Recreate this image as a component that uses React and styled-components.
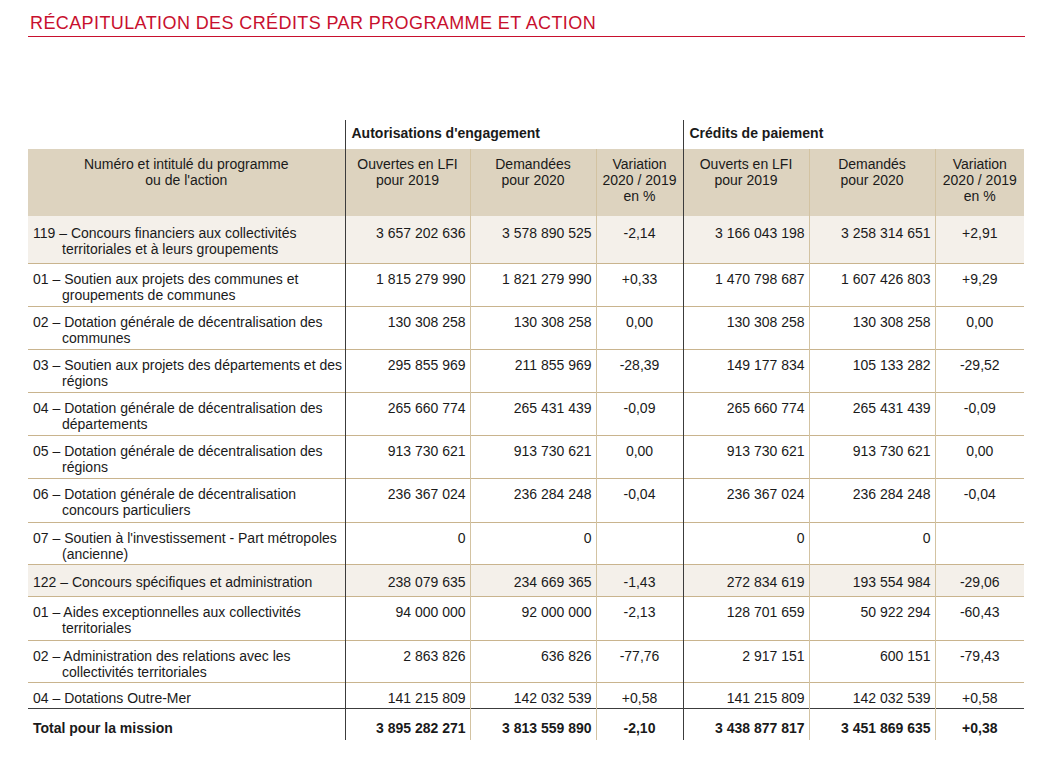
import styled, { createGlobalStyle } from 'styled-components';

const GlobalStyle = createGlobalStyle`
  body {
    margin: 0;
    background: #ffffff;
    font-family: "Liberation Sans", Arial, sans-serif;
    color: #1a1a1a;
  }
`;

const Page = styled.div`
  width: 997px;
  padding: 12px 0 0 28px;
`;

const Title = styled.h1`
  margin: 0;
  padding: 0 0 2px 2px;
  font-size: 18px;
  line-height: 22px;
  font-weight: normal;
  letter-spacing: 0.4px;
  color: #c8102e;
  border-bottom: 1px solid #c8102e;
`;

const Table = styled.table`
  margin-top: 83px;
  width: 996px;
  table-layout: fixed;
  border-collapse: collapse;
  font-size: 14px;
  line-height: 16px;

  td:nth-child(2), td:nth-child(5), th.split {
    border-left: 1px solid #3c3c3c;
  }
  td:nth-child(3), td:nth-child(4), td:nth-child(6), td:nth-child(7) {
    border-left: 1px solid #d3c3a2;
  }
`;

const GroupRow = styled.tr`
  height: 29px;
`;

const GroupCell = styled.th`
  padding: 5px 0 0 6px;
  text-align: left;
  vertical-align: top;
  font-weight: bold;
`;

const HeadRow = styled.tr`
  height: 67px;
  background: #ddd3bf;

  td {
    padding: 7px 2px 0;
    text-align: center;
    vertical-align: top;
    font-weight: normal;
  }
`;

const lineColor = p => {
  if (p.$last) return '#3c3c3c';
  if (p.$bold) return 'transparent';
  return '#c9b48e';
};

const Row = styled.tr`
  height: ${p => p.$h}px;
  background: ${p => (p.$program ? '#f4f0ea' : '#ffffff')};
  border-bottom: 1px solid ${lineColor};
  font-weight: ${p => (p.$bold ? 'bold' : 'normal')};

  td {
    padding-top: ${p => p.$pt}px;
    vertical-align: top;
    white-space: nowrap;
  }
`;

const Label = styled.td`
  padding-left: 34px;
  text-indent: -29px;
  padding-right: 2px;
`;

const Amount = styled.td`
  text-align: right;
  padding-right: 4px;
`;

const Variation = styled.td`
  text-align: center;
`;

const widths = [317, 125, 126, 87, 126, 126, 89];

const rows = [
  { label: ['119 – Concours financiers aux collectivités', 'territoriales et à leurs groupements'], program: true, h: 47, pt: 9, v: ['3 657 202 636', '3 578 890 525', '-2,14', '3 166 043 198', '3 258 314 651', '+2,91'] },
  { label: ['01 – Soutien aux projets des communes et', 'groupements de communes'], h: 43, v: ['1 815 279 990', '1 821 279 990', '+0,33', '1 470 798 687', '1 607 426 803', '+9,29'] },
  { label: ['02 – Dotation générale de décentralisation des', 'communes'], h: 43, v: ['130 308 258', '130 308 258', '0,00', '130 308 258', '130 308 258', '0,00'] },
  { label: ['03 – Soutien aux projets des départements et des', 'régions'], h: 43, v: ['295 855 969', '211 855 969', '-28,39', '149 177 834', '105 133 282', '-29,52'] },
  { label: ['04 – Dotation générale de décentralisation des', 'départements'], h: 43, v: ['265 660 774', '265 431 439', '-0,09', '265 660 774', '265 431 439', '-0,09'] },
  { label: ['05 – Dotation générale de décentralisation des', 'régions'], h: 43, v: ['913 730 621', '913 730 621', '0,00', '913 730 621', '913 730 621', '0,00'] },
  { label: ['06 – Dotation générale de décentralisation', 'concours particuliers'], h: 44, v: ['236 367 024', '236 284 248', '-0,04', '236 367 024', '236 284 248', '-0,04'] },
  { label: ["07 – Soutien à l'investissement - Part métropoles", '(ancienne)'], h: 42, v: ['0', '0', '', '0', '0', ''] },
  { label: ['122 – Concours spécifiques et administration'], program: true, h: 32, pt: 9, v: ['238 079 635', '234 669 365', '-1,43', '272 834 619', '193 554 984', '-29,06'] },
  { label: ['01 – Aides exceptionnelles aux collectivités', 'territoriales'], h: 44, v: ['94 000 000', '92 000 000', '-2,13', '128 701 659', '50 922 294', '-60,43'] },
  { label: ['02 – Administration des relations avec les', 'collectivités territoriales'], h: 42, v: ['2 863 826', '636 826', '-77,76', '2 917 151', '600 151', '-79,43'] },
  { label: ['04 – Dotations Outre-Mer'], h: 26, last: true, v: ['141 215 809', '142 032 539', '+0,58', '141 215 809', '142 032 539', '+0,58'] },
];

const total = ['3 895 282 271', '3 813 559 890', '-2,10', '3 438 877 817', '3 451 869 635', '+0,38'];

const Values = ({ v }) =>
  v.map((x, i) =>
    i % 3 === 2 ? <Variation key={i}>{x}</Variation> : <Amount key={i}>{x}</Amount>
  );

export default function App() {
  return (
    <Page>
      <GlobalStyle />
      <Title>RÉCAPITULATION DES CRÉDITS PAR PROGRAMME ET ACTION</Title>
      <Table>
        <colgroup>
          {widths.map((w, i) => <col key={i} style={{ width: w }} />)}
        </colgroup>
        <thead>
          <GroupRow>
            <GroupCell />
            <GroupCell className="split" colSpan={3}>Autorisations d'engagement</GroupCell>
            <GroupCell className="split" colSpan={3}>Crédits de paiement</GroupCell>
          </GroupRow>
          <HeadRow>
            <td>Numéro et intitulé du programme<br />ou de l'action</td>
            <td>Ouvertes en LFI<br />pour 2019</td>
            <td>Demandées<br />pour 2020</td>
            <td>Variation<br />2020 / 2019<br />en %</td>
            <td>Ouverts en LFI<br />pour 2019</td>
            <td>Demandés<br />pour 2020</td>
            <td>Variation<br />2020 / 2019<br />en %</td>
          </HeadRow>
        </thead>
        <tbody>
          {rows.map((r, i) => (
            <Row key={i} $h={r.h} $pt={r.pt || 7} $program={r.program} $last={r.last}>
              <Label>
                {r.label[0]}
                {r.label[1] && <><br />{r.label[1]}</>}
              </Label>
              <Values v={r.v} />
            </Row>
          ))}
          <Row $h={31} $pt={11} $bold>
            <Label>Total pour la mission</Label>
            <Values v={total} />
          </Row>
        </tbody>
      </Table>
    </Page>
  );
}
